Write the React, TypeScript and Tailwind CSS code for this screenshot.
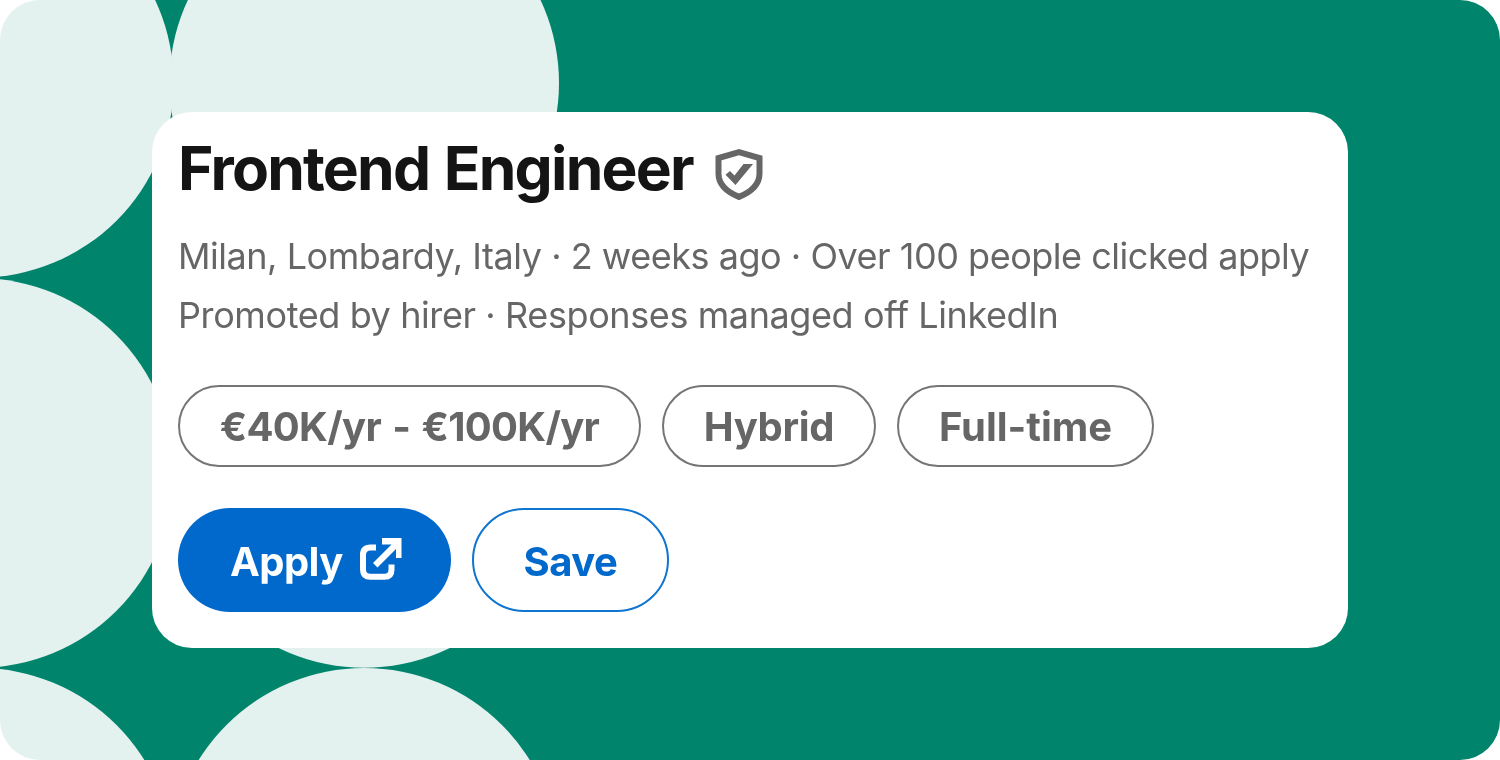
interface Dot {
  cx: number
  cy: number
}

const dots: Dot[] = [
  { cx: -21.2, cy: 82.9 },
  { cx: 364.2, cy: 82.9 },
  { cx: -21.2, cy: 473 },
  { cx: 364.2, cy: 473 },
  { cx: -21.2, cy: 862.7 },
  { cx: 364.2, cy: 862.7 },
]

const tags = [
  { label: "€40K/yr - €100K/yr", className: "w-[463px] tracking-[-0.7px] [word-spacing:2.5px]" },
  { label: "Hybrid", className: "w-[214px] tracking-[-0.3px]" },
  { label: "Full-time", className: "w-[257px] tracking-[0px]" },
]

function Backdrop() {
  return (
    <svg className="absolute inset-0 h-full w-full will-change-transform" viewBox="0 0 1500 760" aria-hidden="true">
      <rect width="1500" height="760" fill="#00846c" />
      {dots.map((dot, index) => (
        <circle key={index} cx={dot.cx} cy={dot.cy} r={194.8} fill="#e3f1ef" />
      ))}
    </svg>
  )
}

function VerifiedIcon() {
  return (
    <svg className="mt-[36px] h-[52px] w-[48px] shrink-0" viewBox="0 0 48 52" aria-hidden="true">
      <path
        d="M24 4.1 44.5 10.1V25.5C44.5 36.5 36 44 24 48.9 12 44 3.5 36.5 3.5 25.5V10.1Z"
        fill="none"
        stroke="#666"
        strokeWidth="6"
      />
      <path d="M10.5 26.8 15 23 19.5 27.5 28.5 16H38L20.5 37Z" fill="#666" />
    </svg>
  )
}

function ExternalIcon() {
  return (
    <svg className="h-[44px] w-[44px]" viewBox="0 0 44 44" fill="none" aria-hidden="true">
      <path
        d="M17 9.5H11.5Q4 9.5 4 17V31.5Q4 38.8 11.5 38.8H25.5Q32.5 38.8 32.5 31.5V26.5"
        stroke="#fff"
        strokeWidth="6"
      />
      <path d="M23 0H42.5V20H37V11L18.5 29.5 14 25 32.5 6.5H23Z" fill="#fff" />
    </svg>
  )
}

export default function App() {
  return (
    <main className="relative flex h-[760px] w-[1500px] items-center justify-center overflow-hidden rounded-[40px] font-['Inter',sans-serif]">
      <Backdrop />
      <section className="relative flex h-[536px] w-[1196px] flex-col rounded-[40px] bg-white pl-[26px]">
        <div className="flex h-[114px] gap-[21px]">
          <h1 className="mt-[19px] w-[516px] whitespace-nowrap text-[60.5px] leading-[74px] font-bold tracking-[-1.8px] text-[#141414] [word-spacing:2px]">
            Frontend Engineer
          </h1>
          <VerifiedIcon />
        </div>
        <div className="h-[159px] whitespace-nowrap text-[36px] leading-[60px] text-[#666]">
          <p className="tracking-[-0.47px]">Milan, Lombardy, Italy · 2 weeks ago · Over 100 people clicked apply</p>
          <p className="-mt-px tracking-[-0.4px]">Promoted by hirer · Responses managed off LinkedIn</p>
        </div>
        <ul className="flex gap-[21px]">
          {tags.map((tag) => (
            <li
              key={tag.label}
              className={`flex h-[82px] items-center justify-center rounded-full border-2 border-[#757575] pt-[2px] text-[40px] leading-none font-bold whitespace-nowrap text-[#666] ${tag.className}`}
            >
              {tag.label}
            </li>
          ))}
        </ul>
        <div className="mt-[41px] flex gap-[21px]">
          <button className="flex h-[104px] w-[273px] items-center rounded-full bg-[#0069cb] pl-[52px] text-[40px] leading-none font-bold tracking-[-0.6px] text-white">
            <span className="w-[129px] pt-[3px] text-left">Apply</span>
            <ExternalIcon />
          </button>
          <button className="h-[104px] w-[197px] rounded-full border-[2.5px] border-[#0f75d0] pt-[3px] text-[40px] leading-none font-bold tracking-[-0.5px] text-[#0069cb]">
            Save
          </button>
        </div>
      </section>
    </main>
  )
}
